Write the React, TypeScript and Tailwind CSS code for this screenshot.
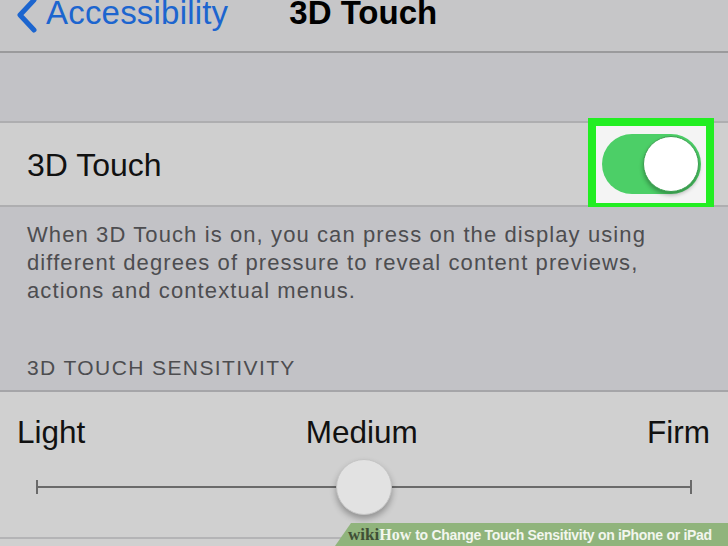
import React from "react";

export default function App() {
  return (
    <div
      className="w-[728px] h-[546px] overflow-hidden relative bg-[#c3c3c7] flex flex-col"
      style={{ fontFamily: '"Liberation Sans", Arial, sans-serif' }}
    >
      {/* Nav bar */}
      <div className="h-[53px] shrink-0 bg-[#c6c6c8] border-b-2 border-[#9a9a9c] flex items-start relative">
        <div className="flex items-start mt-[-7px] ml-[12px] text-[#1c65cf]">
          <svg width="28" height="40" viewBox="0 0 28 40" className="mt-[3px]">
            <path d="M22 4 L8 19 L22 34" fill="none" stroke="#1c65cf" strokeWidth="5" strokeLinecap="round" strokeLinejoin="round" />
          </svg>
          <span className="text-[33px] leading-[40px] ml-[6px] tracking-[0.2px]">Accessibility</span>
        </div>
        <span className="text-[33px] leading-[40px] mt-[-7px] ml-[61px] font-semibold text-black">3D Touch</span>
      </div>

      {/* Gap band */}
      <div className="h-[68px] shrink-0 bg-[#c2c2c6]" />

      {/* 3D Touch row */}
      <div className="h-[86px] shrink-0 bg-[#cfcfcf] border-y-2 border-[#aeaeb0] flex items-center justify-between pl-[27px] pr-[14px]">
        <span className="text-[32px] text-[#111] mt-[1px]">3D Touch</span>
        <div className="w-[126px] h-[93px] shrink-0 border-[8px] border-[#22ee22] bg-[#f4f4f4] flex items-center justify-center">
          <div className="w-[99px] h-[60px] rounded-full bg-[#4ccf67] relative">
            <div className="absolute right-[2px] top-[2px] w-[56px] h-[56px] rounded-full bg-white border border-[#3a9f4f] shadow-[0_3px_4px_rgba(0,0,0,0.3)]" />
          </div>
        </div>
      </div>

      {/* Description */}
      <div className="h-[185px] shrink-0 bg-[#c2c2c6] border-b-2 border-[#a5a5a8] pl-[27px] pt-[14px] text-[#4d4d50]">
        <p className="text-[22px] leading-[28px] tracking-[1.1px]">
          When 3D Touch is on, you can press on the display using
          <br />
          different degrees of pressure to reveal content previews,
          <br />
          actions and contextual menus.
        </p>
        <p className="text-[21px] mt-[47px] tracking-[1.4px]">3D TOUCH SENSITIVITY</p>
      </div>

      {/* Slider row */}
      <div className="flex-1 bg-[#d0d0d0] relative">
        <div className="flex justify-between items-start pl-[17px] pt-[22px] text-[31.5px] text-[#111] leading-[36px] pr-[18px]">
          <span>Light</span>
          <span className="mr-[9px]">Medium</span>
          <span>Firm</span>
        </div>
        <div className="relative mx-[36px] mt-[30px] h-[14px]">
          <div className="absolute left-0 right-0 top-[6px] h-[2px] bg-[#6a6a6a]" />
          <div className="absolute left-0 top-0 w-[2px] h-[14px] bg-[#6a6a6a]" />
          <div className="absolute right-0 top-0 w-[2px] h-[14px] bg-[#6a6a6a]" />
          <div className="absolute left-[300px] top-[-21px] w-[56px] h-[56px] rounded-full bg-[#e2e2e2] border border-[#c4c4c4] shadow-[0_4px_6px_rgba(0,0,0,0.3)]" />
        </div>
        <div className="absolute left-0 right-0 bottom-[7px] h-[2px] bg-[#b4b4b6]" />
      </div>

      {/* Watermark */}
      <div className="absolute right-0 bottom-0 w-[393px] h-[23px] bg-[#90b47c] flex items-center pl-[13px] [clip-path:polygon(16px_0,100%_0,100%_100%,0_100%)]">
        <span className="text-[17px] font-bold text-[#3f4f36] leading-none" style={{ fontFamily: '"Liberation Serif", serif' }}>wiki</span>
        <span className="text-[16px] font-bold text-[#f2f6ee] leading-none" style={{ fontFamily: '"Liberation Serif", serif' }}>How</span>
        <span className="text-[14px] font-bold text-[#f2f6ee] leading-none ml-[4px] tracking-[-0.3px]">to Change Touch Sensitivity on iPhone or iPad</span>
      </div>
    </div>
  );
}
